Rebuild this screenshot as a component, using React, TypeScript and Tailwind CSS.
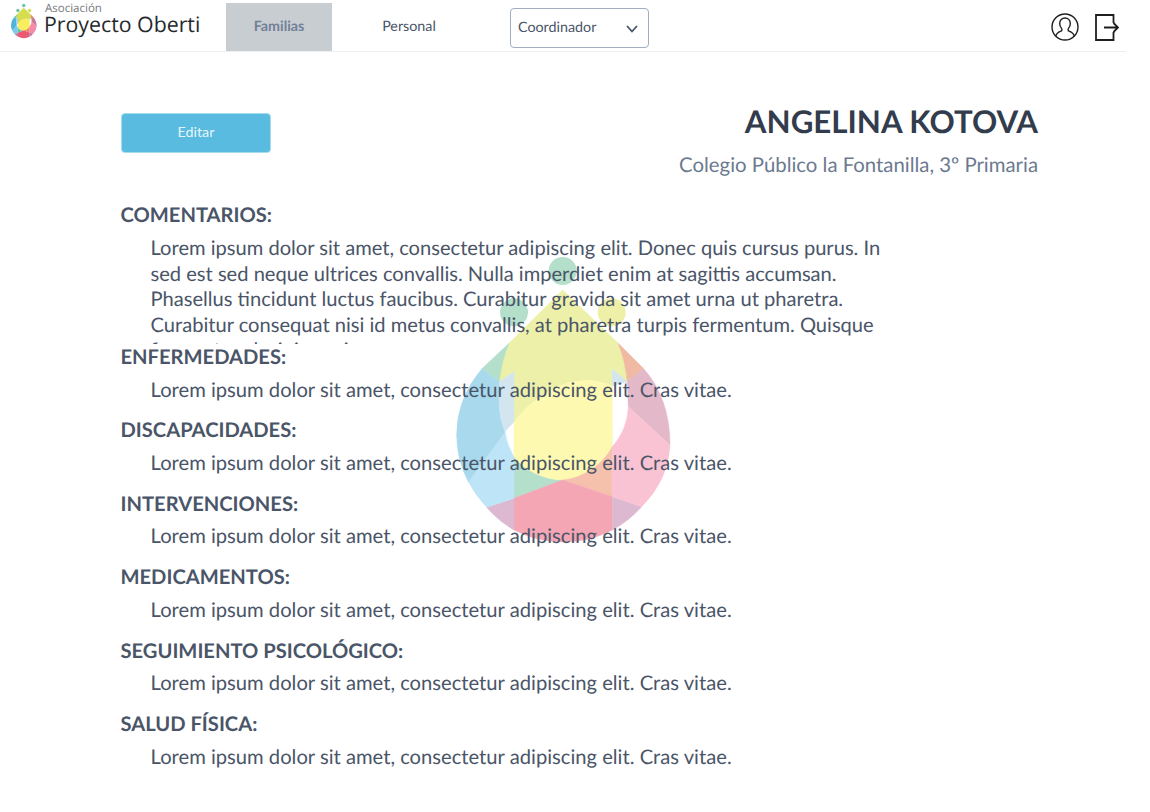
const body = 'Lorem ipsum dolor sit amet, consectetur adipiscing elit. Cras vitae.'

const sections = ['ENFERMEDADES:', 'DISCAPACIDADES:', 'INTERVENCIONES:', 'MEDICAMENTOS:', 'SEGUIMIENTO PSICOLÓGICO:', 'SALUD FÍSICA:']

type Palette = Record<string, string>

const washed: Palette = {
  dotTeal: '#b3dfcb', dotYellow: '#edf0a6', olive: '#edf0a8', lemon: '#fdf9b0', teal: '#b3dfcb',
  orange: '#f6c1ac', red: '#f4a6b4', mauve: '#dcb9d0', sky: '#bee5f7', blue: '#a8d9ec',
  pale: '#d3e6ef', orangeTop: '#efb9a2', mauveTop: '#e3b8c8', pink: '#f9c3d3', hole: '#ffffff',
}

const bright: Palette = {
  dotTeal: '#6cc59c', dotYellow: '#d6de4f', olive: '#d6de4f', lemon: '#f8ee5e', teal: '#6cc59c',
  orange: '#ee8a62', red: '#ea5a72', mauve: '#b87aa5', sky: '#7ccbef', blue: '#4fb3db',
  pale: '#a6cde0', orangeTop: '#e47f58', mauveTop: '#c97896', pink: '#f48bab', hole: '#ffffff',
}

function Part({ d, fill }: { d: string; fill: string }) {
  return <path d={d} fill={fill} stroke={fill} strokeWidth="1.5" />
}

function Drop({ colors, className }: { colors: Palette; className: string }) {
  return (
    <svg viewBox="0 0 750 900" className={className}>
      <circle cx="368" cy="63" r="42" fill={colors.dotTeal} />
      <circle cx="222" cy="187" r="42" fill={colors.dotTeal} />
      <circle cx="515" cy="187" r="42" fill={colors.dotYellow} />
      <Part d="M222 621A194 194 0 0 0 368 690L222 745Z" fill={colors.teal} />
      <Part d="M368 120L535 280Q556 335 562 398L517 357V408Q450 380 380 400Q290 430 222 515V365L178 395Q185 330 207 280Z" fill={colors.olive} />
      <Part d="M222 515Q290 430 380 400Q450 380 517 408V590A194 194 0 0 1 368 690A194 194 0 0 1 222 621Z" fill={colors.lemon} />
      <Part d="M368 690A194 194 0 0 0 517 590V740Z" fill={colors.orange} />
      <Part d="M368 690L517 740V840A320 320 0 0 1 222 840V745Z" fill={colors.red} />
      <Part d="M140 772L222 745V840A320 320 0 0 1 140 772Z" fill={colors.mauve} />
      <Part d="M517 740L605 770A320 320 0 0 1 517 840Z" fill={colors.mauve} />
      <Part d="M195 545A194 194 0 0 0 222 621V745L140 772Q108 738 85 695Z" fill={colors.sky} />
      <Part d="M127 355L178 395V460Q178 505 195 545L85 695Q50 630 50 555Q50 445 127 355Z" fill={colors.blue} />
      <Part d="M178 395L222 365V515L195 545Q178 505 178 460Z" fill={colors.pale} />
      <Part d="M517 357L562 395L517 408Z" fill={colors.pale} />
      <Part d="M207 280L127 355L178 395Q185 330 207 280Z" fill={colors.teal} />
      <Part d="M535 280L610 355L562 395Q556 335 535 280Z" fill={colors.orangeTop} />
      <Part d="M610 355Q690 445 690 585L565 470L562 395Z" fill={colors.mauveTop} />
      <Part d="M565 470L690 585Q685 690 605 770L517 740V590A194 194 0 0 0 565 470Z" fill={colors.pink} />
    </svg>
  )
}

export default function App() {
  return (
    <div className="relative min-h-[812px] w-[1126px] bg-white font-['Lato',sans-serif] text-[#4a5568] [text-rendering:geometricPrecision]">
      <header className="flex h-[52px] items-end border-b border-[#edf0f2]">
        <div className="relative flex h-[51px] w-[226px] shrink-0 self-start">
          <Drop colors={bright} className="absolute left-[9px] top-[3px] h-[36px] w-[30px]" />
          <div className="ml-[44px] font-['Open_Sans',sans-serif] text-[#26292c]">
            <div className="mt-[3px] pl-[1px] text-[11.500px] leading-[12px] text-[#77797c]">Asociación</div>
            <div className="text-[21.300px] leading-[20px] font-medium">Proyecto Oberti</div>
          </div>
        </div>
        <a className="flex h-[48px] w-[106px] items-center justify-center bg-[#c8cdd2] text-[14.300px] leading-[20px] font-bold text-[#718096]">Familias</a>
        <a className="flex h-[48px] w-[154px] items-center justify-center text-[14.300px] leading-[20px] text-[#4a5568]">Personal</a>
        <div className="mb-[3px] ml-[24px] mt-[8px] flex h-[40px] w-[139px] items-center justify-between self-start rounded-[4px] border border-[#a0aec0] pb-[1px] pl-[7px] pr-[10px] text-[14.300px] leading-[20px] text-[#4a5568]">
          Coordinador
          <svg viewBox="0 0 12 8" className="mt-[2px] h-[8px] w-[12px]" fill="none" stroke="#4a5568" strokeWidth="1.8">
            <path d="M1 1l5 5.500L11 1" />
          </svg>
        </div>
        <div className="mb-[10px] ml-auto mr-[7px] flex items-center gap-[16px] self-end">
          <svg viewBox="0 0 28 28" className="h-[28px] w-[28px]" fill="none" stroke="#1f1f1f" strokeWidth="1.4">
            <circle cx="14" cy="14" r="13" />
            <path d="M4.8 23.2c.6-3.600 3-4.400 5.800-5.400.6-.9.5-1.700-.1-2.400-1.200-1.400-1.800-3-1.800-5 0-3.300 2.300-5.400 5.300-5.400s5.300 2.100 5.300 5.400c0 2-.6 3.600-1.800 5-.6.7-.7 1.500-.1 2.400 2.800 1 5.200 1.800 5.800 5.400" />
          </svg>
          <svg viewBox="0 0 24 27" className="h-[27px] w-[24px]" fill="none" stroke="#1f1f1f" strokeWidth="1.8">
            <path d="M18.500 9V1H1v25h17.500v-8" />
            <path d="M9 13.500h14M18.500 9L23 13.500 18.500 18" />
          </svg>
        </div>
      </header>

      <Drop colors={washed} className="absolute left-[440px] top-[250px] h-[300px] w-[250px]" />

      <main className="relative px-[120.500px]">
        <div className="flex items-start justify-between">
          <button className="ml-[0.5px] mt-[61px] h-[40px] w-[150px] rounded-[4px] border border-[#a5dcee] bg-[#59bbdf] pb-[2px] text-[14.300px] leading-[20px] text-[#e6f5fb]">Editar</button>
          <div className="mr-[-32.500px] mt-[49px] text-right">
            <h1 className="text-[31.250px] leading-[40px] font-bold text-[#323c4d]">ANGELINA KOTOVA</h1>
            <p className="mt-[11px] text-[20.350px] leading-[26px] text-[#6b7a8f]">Colegio Público la Fontanilla, 3º Primaria</p>
          </div>
        </div>

        <section className="mt-[24px]">
          <h2 className="text-[20.150px] leading-[26px] font-bold">COMENTARIOS:</h2>
          <div className="h-[116px] w-[765px] overflow-hidden pl-[30px] pt-[8px] text-[20.120px] leading-[25.6px]">
            Lorem ipsum dolor sit amet, consectetur adipiscing elit. Donec quis cursus purus. In sed est sed neque ultrices convallis. Nulla imperdiet enim at sagittis accumsan. Phasellus tincidunt luctus faucibus. Curabitur gravida sit amet urna ut pharetra. Curabitur consequat nisi id metus convallis, at pharetra turpis fermentum. Quisque fermentum lacinia sapien.
          </div>
        </section>

        {sections.map((title) => (
          <section key={title} className="mb-[14.900px] h-[58.500px]">
            <h2 className="text-[20.150px] leading-[26px] font-bold">{title}</h2>
            <p className="pl-[30px] pt-[7.600px] text-[20.200px] leading-[25.6px]">{body}</p>
          </section>
        ))}
      </main>
    </div>
  )
}
